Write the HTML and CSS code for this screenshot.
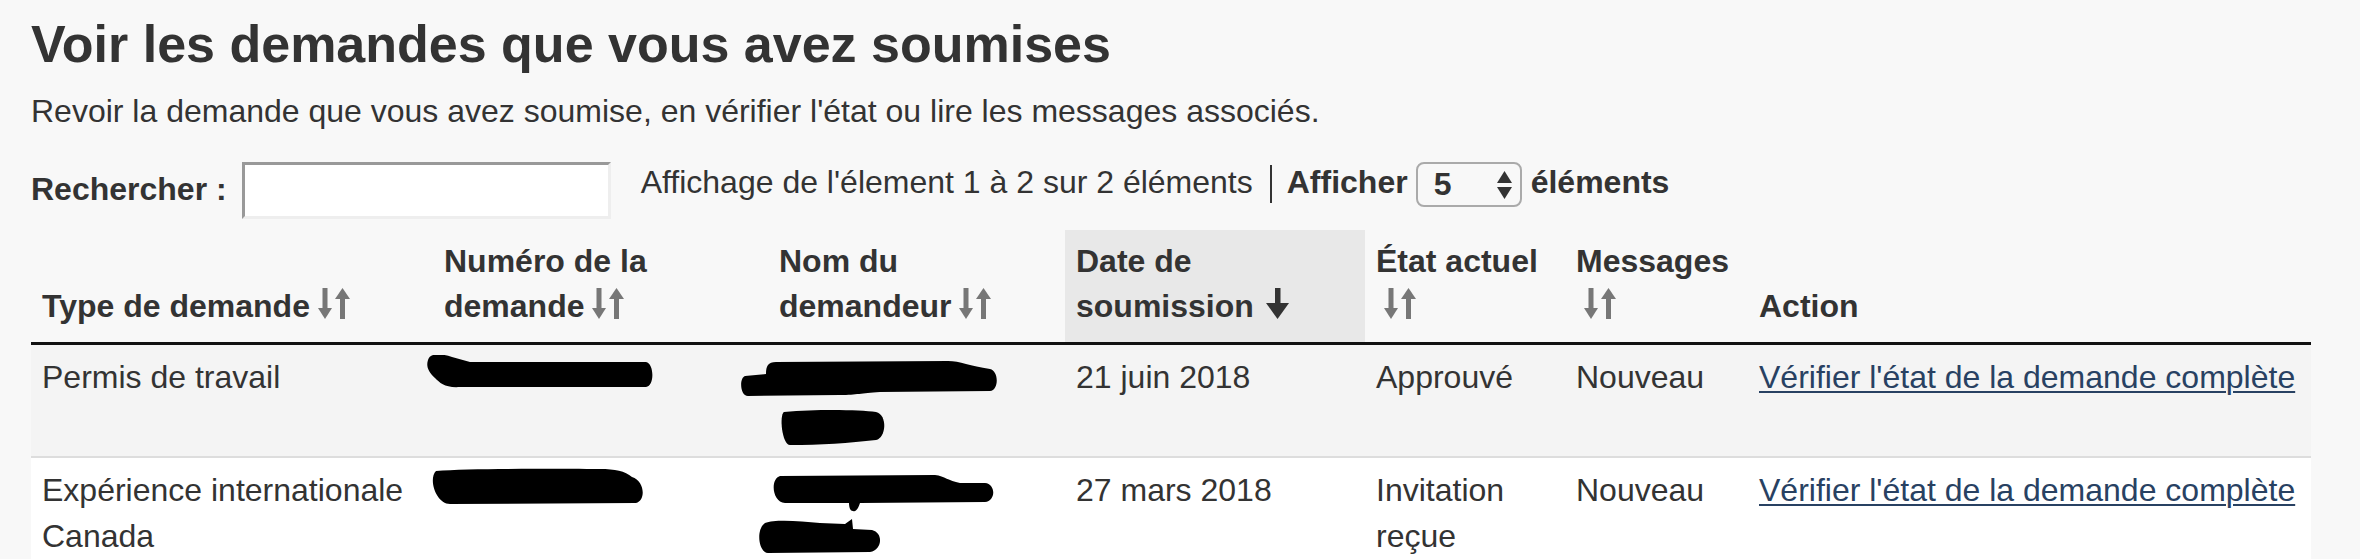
FILE: index.html
```html
<!DOCTYPE html>
<html lang="fr">
<head>
    <meta charset="UTF-8">
    <meta name="viewport" content="width=device-width, initial-scale=1.0">
    <title>Voir les demandes que vous avez soumises</title>
    <link rel="stylesheet" href="styles.css">
</head>
<body>
    <main class="page">
        <h1>Voir les demandes que vous avez soumises</h1>
        <p class="intro">Revoir la demande que vous avez soumise, en vérifier l'état ou lire les messages associés.</p>

        <div class="toolbar">
            <label class="search-label" for="search">Rechercher :</label>
            <input type="text" id="search" class="search-input">
            <span class="info">Affichage de l'élement 1 à 2 sur 2 éléments</span>
            <span class="sep"></span>
            <label class="length-label" for="length">Afficher</label>
            <span class="select-wrap">
                <select id="length" class="length-select">
                    <option>5</option>
                    <option>10</option>
                    <option>25</option>
                </select>
                <svg class="select-arrows" viewBox="0 0 15 28" aria-hidden="true">
                    <polygon points="0,12 15,12 7.5,0"/>
                    <polygon points="0,16 15,16 7.5,28"/>
                </svg>
            </span>
            <span class="length-label after">éléments</span>
        </div>

        <table class="requests">
            <colgroup>
                <col class="c-type">
                <col class="c-num">
                <col class="c-name">
                <col class="c-date">
                <col class="c-state">
                <col class="c-msg">
                <col class="c-action">
            </colgroup>
            <thead>
                <tr>
                    <th>Type de demande&#8203;<svg class="sort" viewBox="0 0 32 31"><rect x="4.5" y="0" width="5" height="21"/><polygon points="0,20 14,20 7,31"/><polygon points="17,11 32,11 24.5,0"/><rect x="22" y="10" width="5" height="21"/></svg></th>
                    <th>Numéro de la demande&#8203;<svg class="sort" viewBox="0 0 32 31"><rect x="4.5" y="0" width="5" height="21"/><polygon points="0,20 14,20 7,31"/><polygon points="17,11 32,11 24.5,0"/><rect x="22" y="10" width="5" height="21"/></svg></th>
                    <th>Nom du demandeur&#8203;<svg class="sort" viewBox="0 0 32 31"><rect x="4.5" y="0" width="5" height="21"/><polygon points="0,20 14,20 7,31"/><polygon points="17,11 32,11 24.5,0"/><rect x="22" y="10" width="5" height="21"/></svg></th>
                    <th class="sorted">Date de soumission&#8203;<svg class="sort-active" viewBox="0 0 23 31"><rect x="9" y="0" width="5.5" height="16"/><polygon points="0,15 23,15 11.5,31"/></svg></th>
                    <th>État actuel&#8203;<svg class="sort" viewBox="0 0 32 31"><rect x="4.5" y="0" width="5" height="21"/><polygon points="0,20 14,20 7,31"/><polygon points="17,11 32,11 24.5,0"/><rect x="22" y="10" width="5" height="21"/></svg></th>
                    <th>Messages&#8203;<svg class="sort" viewBox="0 0 32 31"><rect x="4.5" y="0" width="5" height="21"/><polygon points="0,20 14,20 7,31"/><polygon points="17,11 32,11 24.5,0"/><rect x="22" y="10" width="5" height="21"/></svg></th>
                    <th>Action</th>
                </tr>
            </thead>
            <tbody>
                <tr class="row-odd">
                    <td>Permis de travail</td>
                    <td>
                        <svg class="redact one-line" viewBox="404 355 270 46" aria-hidden="true">
                            <path d="M428 360 C430 353 440 353 452 357 L470 362 L646 362 C654 363 655 386 646 387 L460 387 C445 388 440 383 435 378 C428 372 426 366 428 360 Z"/>
                        </svg>
                    </td>
                    <td>
                        <svg class="redact two-line" viewBox="739 355 270 91" aria-hidden="true">
                            <path d="M745 376 L766 374 C766 366 768 362 776 362 L948 361 C960 361 970 366 990 369 C999 371 999 390 990 391 L880 392 C860 393 858 395 840 395 L748 396 C740 396 739 378 745 376 Z"/>
                            <path d="M784 412 C820 409 860 410 876 412 C888 415 886 438 876 440 C850 443 820 445 790 445 C782 445 779 415 784 412 Z"/>
                        </svg>
                    </td>
                    <td>21 juin 2018</td>
                    <td>Approuvé</td>
                    <td>Nouveau</td>
                    <td><a class="status-link" href="#">Vérifier l'état de la demande complète</a></td>
                </tr>
                <tr class="row-even">
                    <td>Expérience internationale Canada</td>
                    <td>
                        <svg class="redact one-line" viewBox="404 469 270 46" aria-hidden="true">
                            <path d="M436 472 C470 469 560 470 600 470 C615 470 625 472 632 478 C645 482 646 502 636 504 L450 505 C436 505 428 480 436 472 Z"/>
                        </svg>
                    </td>
                    <td>
                        <svg class="redact two-line" viewBox="739 469 270 91" aria-hidden="true">
                            <path d="M780 477 L935 476 C945 477 948 482 960 484 L985 484 C996 485 996 502 985 503 L860 504 C858 510 856 513 853 512 C850 512 849 508 849 504 L785 504 C772 503 770 480 780 477 Z"/>
                            <path d="M765 524 C775 520 800 522 820 524 L845 525 L852 520 L853 530 L872 531 C884 534 882 551 870 553 L768 554 C758 553 756 530 765 524 Z"/>
                        </svg>
                    </td>
                    <td>27 mars 2018</td>
                    <td>Invitation reçue</td>
                    <td>Nouveau</td>
                    <td><a class="status-link" href="#">Vérifier l'état de la demande complète</a></td>
                </tr>
            </tbody>
        </table>
    </main>
</body>
</html>
```

FILE: styles.css
```css
body {
    margin: 0;
    background-color: #f8f8f8;
    color: #333;
    font-family: "Liberation Sans", Arial, sans-serif;
    font-size: 32px;
    line-height: 1.428571;
}

.page {
    width: 2280px;
    padding: 16px 0 0 31px;
}

h1 {
    margin: 0 0 16px;
    font-size: 52px;
    line-height: 57px;
    font-weight: bold;
}

.intro {
    margin: 0 0 27px;
}

/* search + page length bar */
.toolbar {
    display: flex;
    align-items: flex-start;
}

.search-label {
    margin-top: 5px;
    font-weight: bold;
}

.search-input {
    box-sizing: border-box;
    width: 369px;
    height: 57px;
    margin: 0 0 0 15px;
    padding: 0 8px;
    border: 3px solid;
    border-color: #999 #eee #eee #999;
    background-color: #fff;
    font: inherit;
}

.info {
    margin: -2px 0 0 30px;
}

.sep {
    width: 2px;
    height: 38px;
    margin: 3px 15px 0 17px;
    background-color: #333;
}

.length-label {
    margin-top: -2px;
    font-weight: bold;
}

.length-label.after {
    margin-left: 9px;
}

.select-wrap {
    position: relative;
    margin-left: 8px;
}

.length-select {
    -webkit-appearance: none;
    appearance: none;
    box-sizing: border-box;
    width: 106px;
    height: 45px;
    padding: 0 0 0 16px;
    border: 2px solid #aaa;
    border-radius: 8px;
    background-color: transparent;
    color: #333;
    font: inherit;
    font-weight: bold;
    line-height: normal;
}

.select-arrows {
    position: absolute;
    top: 9px;
    right: 10px;
    width: 15px;
    height: 28px;
    fill: #333;
    pointer-events: none;
}

/* table */
.requests {
    width: 2280px;
    margin-top: 11px;
    border-collapse: collapse;
    table-layout: fixed;
}

.c-type { width: 402px; }
.c-num { width: 335px; }
.c-name { width: 297px; }
.c-date { width: 300px; }
.c-state { width: 200px; }
.c-msg { width: 183px; }
.c-action { width: 563px; }

.requests th {
    padding: 9px 11px 12px;
    border-bottom: 3px solid #111;
    text-align: left;
    vertical-align: bottom;
    font-weight: bold;
}

.requests th.sorted {
    background-color: #e8e8e8;
}

.sort {
    width: 32px;
    height: 31px;
    margin-left: 8px;
    vertical-align: -2px;
    fill: #777;
}

.sort-active {
    width: 23px;
    height: 31px;
    margin-left: 12px;
    vertical-align: -2px;
    fill: #333;
}

.requests td {
    padding: 10px 11px;
    vertical-align: top;
}

.row-odd td {
    background-color: #f4f4f4;
    border-bottom: 2px solid #ddd;
}

.row-even td {
    background-color: #fff;
}

.redact {
    display: block;
    margin-left: -40px;
    width: 270px;
    fill: #000;
}

.redact.one-line {
    height: 46px;
}

.redact.two-line {
    height: 91px;
}

.status-link {
    color: #284162;
    text-decoration: underline;
    text-decoration-thickness: 2px;
    text-underline-offset: 3px;
}
```
